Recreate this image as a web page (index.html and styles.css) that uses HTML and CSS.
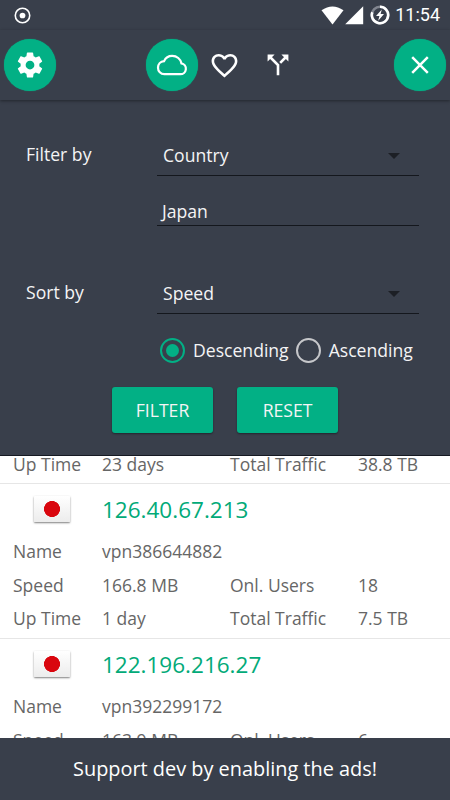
FILE: index.html
```
<!DOCTYPE html>
<html lang="en">
<head>
    <meta charset="UTF-8">
    <meta name="viewport" content="width=device-width, initial-scale=1.0">
    <title>VPN Servers</title>
    <link rel="stylesheet" href="styles.css">
</head>
<body>
    <div class="app">
        <div class="status-bar">
            <svg class="status-record" viewBox="0 0 16 16"><circle cx="8" cy="8" r="6.800" fill="none" stroke="#fff" stroke-width="1.500"/><circle cx="8" cy="8" r="2.700" fill="#fff"/></svg>
            <div class="status-icons">
                <svg width="23" height="19" viewBox="0 0 23 19"><path d="M.5 4.300Q11.500-3.300 22.500 4.300L11.500 18.600z" fill="#fff"/></svg>
                <svg width="19" height="19" viewBox="0 0 19 19"><path d="M18.200.200v18H.200z" fill="#fff"/></svg>
                <svg class="status-battery" width="20" height="20" viewBox="0 0 20 20"><circle cx="10" cy="10" r="8.200" fill="none" stroke="#828690" stroke-width="2.600"/><path d="M10 1.800a8.200 8.200 0 1 1-7.700 5.400" fill="none" stroke="#fff" stroke-width="2.600"/><path d="M11.800 4.400L6 11h3.400l-1.200 4.800L14 9h-3.400z" fill="#fff"/></svg>
                <span class="clock">11:54</span>
            </div>
        </div>

        <div class="toolbar">
            <button class="round-btn">
                <svg width="30" height="30" viewBox="0 0 24 24"><path fill="#fff" d="M19.43 12.98c.04-.32.07-.64.07-.98s-.03-.66-.07-.98l2.11-1.65c.19-.15.24-.42.12-.64l-2-3.46c-.12-.22-.39-.3-.61-.22l-2.49 1c-.52-.4-1.08-.73-1.69-.98l-.38-2.65A.49.49 0 0 0 14 2h-4c-.25 0-.46.18-.49.42l-.38 2.65c-.61.25-1.17.59-1.69.98l-2.49-1c-.23-.09-.49 0-.61.22l-2 3.46c-.13.22-.07.49.12.64l2.11 1.65c-.04.32-.07.65-.07.98s.03.66.07.98l-2.11 1.65c-.19.15-.24.42-.12.64l2 3.46c.12.22.39.3.61.22l2.49-1c.52.4 1.08.73 1.69.98l.38 2.65c.03.24.24.42.49.42h4c.25 0 .46-.18.49-.42l.38-2.65c.61-.25 1.17-.59 1.69-.98l2.49 1c.23.09.49 0 .61-.22l2-3.46c.12-.22.07-.49-.12-.64zM12 15.5A3.5 3.5 0 1 1 12 8.500a3.500 3.500 0 0 1 0 7z"/></svg>
            </button>
            <div class="tabs">
                <button class="round-btn">
                    <svg width="32" height="22" viewBox="0 0 32 22"><path d="M8.300 20.200H24.200a5.500 5.500 0 0 0 1.200-10.900C24.700 5 20.800 1.900 16.200 1.900c-3.600 0-6.700 2-8.100 5.200C4.400 7.400 2 10.300 2 13.700c0 3.700 2.700 6.500 6.300 6.500z" fill="none" stroke="#fff" stroke-width="2.200"/></svg>
                </button>
                <button class="tab-btn">
                    <svg width="31" height="31" viewBox="0 0 24 24"><path fill="#fff" d="M16.5 3c-1.740 0-3.410.81-4.500 2.090C10.910 3.810 9.240 3 7.500 3 4.420 3 2 5.420 2 8.500c0 3.780 3.400 6.860 8.550 11.540L12 21.350l1.450-1.320C18.600 15.360 22 12.280 22 8.500 22 5.420 19.580 3 16.500 3zm-4.400 15.550l-.1.100-.1-.1C7.140 14.240 4 11.390 4 8.500 4 6.500 5.500 5 7.500 5c1.540 0 3.040.99 3.570 2.360h1.870C13.460 5.990 14.960 5 16.500 5c2 0 3.500 1.500 3.500 3.500 0 2.890-3.140 5.740-7.900 10.050z"/></svg>
                </button>
                <button class="tab-btn">
                    <svg width="22" height="22" viewBox="0 0 22 22"><path d="M.6.600h7L.6 7.600zM21.400.600h-7l7 7z" fill="#fff"/><path d="M3.500 3.500L11 11v10.200M18.500 3.500L13.200 8.800" fill="none" stroke="#fff" stroke-width="2.600"/></svg>
                </button>
            </div>
            <button class="round-btn">
                <svg width="20" height="20" viewBox="0 0 20 20"><path d="M2.200 2.200l15.600 15.600M17.800 2.200L2.200 17.800" fill="none" stroke="#fff" stroke-width="2.500"/></svg>
            </button>
        </div>

        <div class="filter-panel">
            <div class="form-row">
                <span class="form-label">Filter by</span>
                <div class="select">Country<span class="caret"></span></div>
            </div>
            <div class="form-row">
                <div class="text-input">Japan</div>
            </div>
            <div class="form-row sort-row">
                <span class="form-label">Sort by</span>
                <div class="select">Speed<span class="caret"></span></div>
            </div>
            <div class="radio-group">
                <span class="radio checked"></span>
                <span class="radio-label">Descending</span>
                <span class="radio"></span>
                <span class="radio-label">Ascending</span>
            </div>
            <div class="actions">
                <button class="action-btn">FILTER</button>
                <button class="action-btn">RESET</button>
            </div>
        </div>

        <div class="server-list">
            <div class="server first">
                <span>Up Time</span><span>23 days</span><span>Total Traffic</span><span>38.8 TB</span>
            </div>
            <div class="server">
                <div class="flag"></div><div class="ip">126.40.67.213</div>
                <span>Name</span><span class="wide">vpn386644882</span>
                <span>Speed</span><span>166.8 MB</span><span>Onl. Users</span><span>18</span>
                <span>Up Time</span><span>1 day</span><span>Total Traffic</span><span>7.5 TB</span>
            </div>
            <div class="server">
                <div class="flag"></div><div class="ip">122.196.216.27</div>
                <span>Name</span><span class="wide">vpn392299172</span>
                <span>Speed</span><span>163.9 MB</span><span>Onl. Users</span><span>6</span>
            </div>
        </div>

        <div class="footer">Support dev by enabling the ads!</div>
    </div>
</body>
</html>
```
FILE: styles.css
```
* {
    box-sizing: border-box;
}
body {
    margin: 0;
    background: #fff;
    font-family: 'Open Sans', 'Noto Sans', sans-serif;
    font-size: 17.6px;
}
.app {
    display: flex;
    flex-direction: column;
    width: 450px;
    height: 800px;
    overflow: hidden;
    color: #f4f4f5;
}
button {
    display: flex;
    align-items: center;
    justify-content: center;
    padding: 0;
    border: none;
    background: none;
    color: inherit;
    font-family: inherit;
}

/* status bar */
.status-bar {
    flex: none;
    display: flex;
    justify-content: space-between;
    align-items: center;
    height: 30px;
    padding: 0 10px 0 14px;
    background: #393f4b;
}
.status-record {
    width: 17px;
    height: 17px;
}
.status-icons {
    display: flex;
    align-items: center;
    gap: 1px;
}
.status-battery {
    margin-left: 5px;
}
.clock {
    margin-left: 4px;
    font-family: Roboto, sans-serif;
    font-size: 18px;
    line-height: 32px;
    color: #fff;
}

/* toolbar */
.toolbar {
    flex: none;
    display: flex;
    justify-content: space-between;
    height: 70px;
    padding: 9px 4px 0;
    background: #393f4b;
    box-shadow: 0 1px 3px rgba(0, 0, 0, 0.4);
    z-index: 1;
}
.round-btn {
    width: 52px;
    height: 52px;
    border-radius: 50%;
    background: #02b085;
    box-shadow: 0 0 1px #02b085;
}
.tabs {
    display: flex;
}
.tab-btn {
    width: 53px;
    height: 52px;
}

/* filter panel */
.filter-panel {
    flex: none;
    height: 356px;
    padding: 35px 31px 0 26px;
    background: #393f4b;
    border-bottom: 1px solid #151922;
}
.form-row {
    display: flex;
    justify-content: flex-end;
}
.form-label {
    flex: 1;
    line-height: 39px;
}
.select {
    display: flex;
    align-items: center;
    justify-content: space-between;
    width: 262px;
    height: 41px;
    padding: 0 19px 1px 6px;
    border-bottom: 1px solid #14171d;
}
.caret {
    margin-top: 2px;
    border: 6px solid transparent;
    border-top-color: #1c1f25;
    border-bottom: none;
}
.text-input {
    width: 262px;
    height: 35px;
    margin-top: 15px;
    padding-left: 5px;
    border-bottom: 1px solid #14171d;
    line-height: 41px;
}
.sort-row {
    margin-top: 47px;
}
.radio-group {
    display: flex;
    align-items: center;
    height: 26px;
    margin: 23px -5px 0 134px;
}
.radio {
    display: flex;
    align-items: center;
    justify-content: center;
    width: 25px;
    height: 25px;
    border: 2.5px solid #c6c7ca;
    border-radius: 50%;
}
.radio.checked {
    border-color: #02b085;
}
.radio.checked::after {
    content: '';
    width: 13px;
    height: 13px;
    border-radius: 50%;
    background: #02b085;
}
.radio-label {
    margin: 0 7px 0 8px;
}
.actions {
    display: flex;
    gap: 24px;
    margin: 24px 0 0 86px;
}
.action-btn {
    width: 101px;
    height: 46px;
    border-radius: 3px;
    background: #02b085;
    box-shadow: 0 1px 2px rgba(0, 0, 0, 0.4);
    font-size: 17.6px;
}

/* server list */
.server-list {
    flex: 1;
    min-height: 0;
    overflow: hidden;
    color: #666;
}
.server {
    display: grid;
    grid-template-columns: 89px 128px 128px 1fr;
    grid-template-rows: 50px;
    grid-auto-rows: 33.67px;
    height: 155px;
    padding: 1px 0 0 13px;
    border-bottom: 1px solid #e6e6e6;
    font-size: 17.5px;
    line-height: 33px;
}
.server.first {
    grid-template-rows: 34px;
    height: 28px;
    padding-top: 0;
    line-height: 17px;
}
.wide {
    grid-column: span 3;
}
.ip {
    grid-column: span 3;
    font-size: 22.5px;
    line-height: 50px;
    color: #02aa78;
}
.flag {
    width: 36px;
    height: 26px;
    margin: 11px 0 0 21px;
    border-radius: 1px;
    background:
        radial-gradient(circle at 50% 50%, #d9060e 0 7.7px, transparent 8.3px),
        linear-gradient(#fff, #ececec);
    box-shadow: 0 1px 2px rgba(0, 0, 0, 0.5);
}

/* footer */
.footer {
    flex: none;
    height: 62px;
    background: #393f4b;
    color: #fff;
    font-size: 19.9px;
    line-height: 62px;
    text-align: center;
}
```
